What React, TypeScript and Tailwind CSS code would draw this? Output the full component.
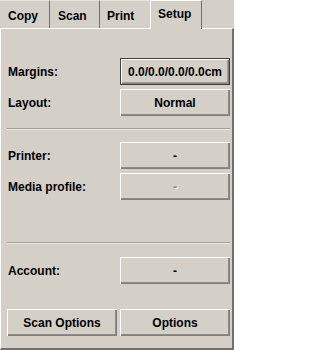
import React from "react";

function Btn({
  children,
  focused = false,
  disabled = false,
  className = "",
}: {
  children: React.ReactNode;
  focused?: boolean;
  disabled?: boolean;
  className?: string;
}) {
  return (
    <div
      className={
        "h-[27px] flex items-center justify-center bg-[#d4d0c8] " +
        (focused
          ? "border border-[#404040] shadow-[inset_1px_1px_#ffffff,inset_-1px_-1px_#808080,inset_-2px_-2px_#a09c94] "
          : "shadow-[inset_1px_1px_#ffffff,inset_-1px_-1px_#808080,inset_-2px_-2px_#8c8a85] ") +
        (disabled ? "text-[#8a8a8a] [text-shadow:1px_1px_#ffffff] " : "text-black ") +
        className
      }
    >
      {children}
    </div>
  );
}

function Row({
  label,
  children,
  className = "",
}: {
  label: string;
  children: React.ReactNode;
  className?: string;
}) {
  return (
    <div className={"flex items-center " + className}>
      <div className="flex-1 pl-[1px]">{label}</div>
      <div className="w-[110px]">{children}</div>
    </div>
  );
}

function Sep({ className = "" }: { className?: string }) {
  return (
    <div className={"mr-[2px] " + className}>
      <div className="h-px bg-[#a4a19b]" />
      <div className="h-px bg-[#ece9e4]" />
    </div>
  );
}

export default function App() {
  return (
    <div className="w-[234px] h-[350px] bg-[#d4d0c8] flex flex-col font-['Liberation_Sans',Arial,sans-serif] text-[12px] font-bold text-black leading-none select-none">
      {/* Tabs */}
      <div className="flex items-end h-[28px] relative z-10">
        <div className="w-[50px] h-[28px] border-t border-t-[#e8e5e0] border-r border-r-[#707070] flex items-center pl-[8px] pt-[2px]">
          Copy
        </div>
        <div className="w-[50px] h-[28px] border-t border-t-[#e8e5e0] border-r border-r-[#707070] flex items-center pl-[8px] pt-[2px]">
          Scan
        </div>
        <div className="w-[50px] h-[28px] border-t border-t-[#e8e5e0] flex items-center pl-[7px] pt-[2px]">
          Print
        </div>
        <div className="w-[52px] h-[29px] -mb-px bg-[#d4d0c8] border-t border-l border-white border-r border-r-[#707070] flex items-center pl-[7px] pb-[2px]">
          Setup
        </div>
        <div className="flex-1" />
      </div>

      {/* Panel */}
      <div className="flex-1 border-t border-l border-t-white border-l-white border-r-2 border-b-2 border-r-[#707070] border-b-[#707070] pl-[6px] flex flex-col">
        <div className="mr-[2px] flex flex-col">
          <Row label="Margins:" className="mt-[29px]">
            <Btn focused>0.0/0.0/0.0/0.0cm</Btn>
          </Row>
          <Row label="Layout:" className="mt-[4px]">
            <Btn>Normal</Btn>
          </Row>
        </div>

        <Sep className="mt-[12px]" />

        <div className="mr-[2px] flex flex-col">
          <Row label="Printer:" className="mt-[12px]">
            <Btn>-</Btn>
          </Row>
          <Row label="Media profile:" className="mt-[4px]">
            <Btn disabled>-</Btn>
          </Row>
        </div>

        <Sep className="mt-[42px]" />

        <div className="mr-[2px] flex flex-col">
          <Row label="Account:" className="mt-[13px]">
            <Btn>-</Btn>
          </Row>
          <div className="flex gap-[3px] mt-[25px]">
            <Btn className="w-[110px]">Scan Options</Btn>
            <Btn className="w-[110px]">Options</Btn>
          </div>
        </div>
      </div>
    </div>
  );
}
